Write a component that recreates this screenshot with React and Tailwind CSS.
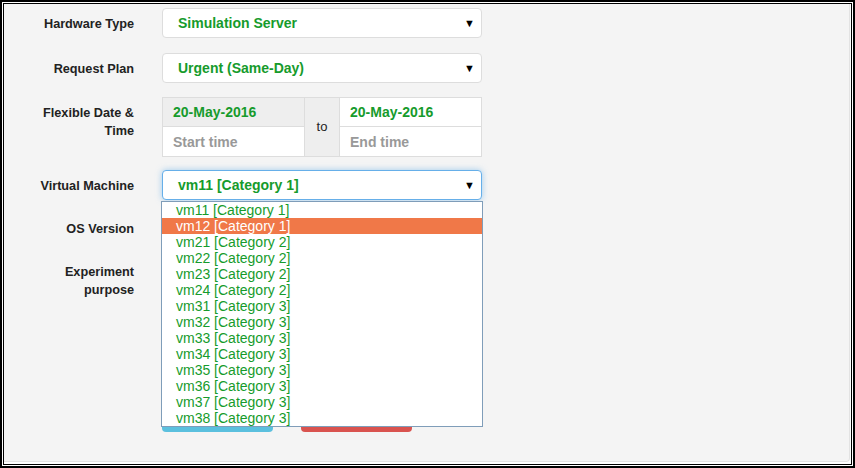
const vms = [
  ["vm11", 1], ["vm12", 1],
  ["vm21", 2], ["vm22", 2], ["vm23", 2], ["vm24", 2],
  ["vm31", 3], ["vm32", 3], ["vm33", 3], ["vm34", 3], ["vm35", 3], ["vm36", 3], ["vm37", 3], ["vm38", 3],
];

function Label({ children }) {
  return (
    <div className="w-[130px] shrink-0 text-right text-[12.7px] font-bold leading-[18px] text-[#222] pt-[7px]">
      {children}
    </div>
  );
}

function Select({ value, focused }) {
  return (
    <div
      className={
        "relative flex h-[30px] w-[320px] items-center rounded border bg-white pl-[15px] text-[14px] font-bold text-[#169b2c] " +
        (focused ? "border-[#66afe9] shadow-[0_0_6px_rgba(102,175,233,0.6)]" : "border-[#ddd]")
      }
    >
      {value}
      <span className="absolute right-[6px] top-[6px] text-[11px] text-black">▼</span>
    </div>
  );
}

export default function App() {
  return (
    <div className="h-[468px] w-[855px] border-2 border-black bg-white p-px font-['Liberation_Sans',Arial,sans-serif]">
      <div className="h-full w-full border border-black bg-white">
        <div className="mb-[2px] mr-px h-[calc(100%-2px)] rounded-br border-b border-r border-[#e3e3e3] bg-[#f4f4f4] pt-1">
          <div className="flex flex-col">
            <div className="mb-[15px] flex gap-[28px]">
              <Label>Hardware Type</Label>
              <Select value="Simulation Server" />
            </div>
            <div className="mb-[14px] flex gap-[28px]">
              <Label>Request Plan</Label>
              <Select value="Urgent (Same-Day)" />
            </div>
            <div className="mb-[13px] flex gap-[28px]">
              <Label>
                Flexible Date &amp;
                <br />
                Time
              </Label>
              <div className="flex h-[60px] w-[320px] text-[14px] font-bold">
                <div className="flex w-[143px] flex-col">
                  <div className="flex h-[30px] items-center border border-[#ddd] bg-[#eee] pl-[10px] text-[#169b2c]">20-May-2016</div>
                  <div className="flex h-[30px] items-center border border-t-0 border-[#ddd] bg-white pl-[10px] pt-px text-[#999]">Start time</div>
                </div>
                <div className="flex w-[34px] items-center justify-center border-y border-[#ddd] bg-[#eee] text-[13px] font-normal text-[#222]">to</div>
                <div className="flex flex-1 flex-col">
                  <div className="flex h-[30px] items-center border border-[#ddd] bg-white pl-[10px] text-[#169b2c]">20-May-2016</div>
                  <div className="flex h-[30px] items-center border border-t-0 border-[#ddd] bg-white pl-[10px] pt-px text-[#999]">End time</div>
                </div>
              </div>
            </div>
            <div className="relative mb-[13px] flex gap-[28px]">
              <Label>Virtual Machine</Label>
              <Select value="vm11 [Category 1]" focused />
              <div className="absolute left-[157px] top-[31px] z-10 w-[322px] border border-[#7f9db9] bg-white text-[14px] leading-[16px]">
                {vms.map(([name, cat]) => (
                  <div
                    key={name}
                    className={"h-[16px] pl-[14px] " + (name === "vm12" ? "bg-[#f07848] text-white" : "text-[#169b2c]")}
                  >
                    {name} [Category {cat}]
                  </div>
                ))}
              </div>
            </div>
            <div className="mb-[13px] flex gap-[28px]">
              <Label>OS Version</Label>
              <Select value="" />
            </div>
            <div className="mb-[22px] flex gap-[28px]">
              <Label>
                Experiment
                <br />
                purpose
              </Label>
              <div className="h-[120px] w-[320px] rounded border border-[#ddd] bg-white" />
            </div>
            <div className="flex gap-[28px] pl-[158px]">
              <div className="h-[34px] w-[111px] rounded bg-[#5bc0de]" />
              <div className="h-[34px] w-[111px] rounded bg-[#d9534f]" />
            </div>
          </div>
        </div>
      </div>
    </div>
  );
}
